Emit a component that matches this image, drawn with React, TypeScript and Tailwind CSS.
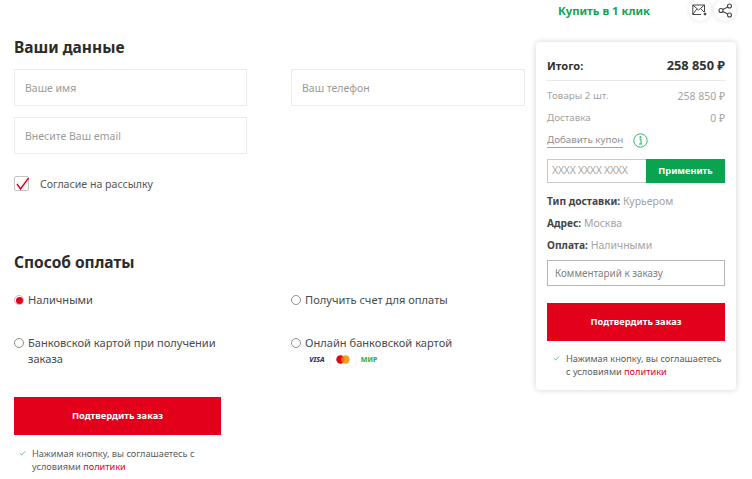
import { Check } from 'lucide-react';

const font = { fontFamily: '"Noto Sans", sans-serif' };

function Field({ placeholder }: { placeholder: string }) {
  return (
    <div className="flex h-[37px] w-full items-center border border-[#ebebeb] bg-white pl-[10px] pt-[2px] text-[10.5px] text-[#9a9a9a]">
      {placeholder}
    </div>
  );
}

function Radio({ active = false }: { active?: boolean }) {
  return active ? (
    <span className="mt-[3px] flex h-[10px] w-[10px] shrink-0 items-center justify-center rounded-full border border-[#f2a5ae]">
      <span className="h-[7px] w-[7px] rounded-full bg-[#e2001a]" />
    </span>
  ) : (
    <span className="mt-[3px] h-[10px] w-[10px] shrink-0 rounded-full border border-[#8f8f8f]" />
  );
}

function PayOption({ label, active, children }: { label: string; active?: boolean; children?: React.ReactNode }) {
  return (
    <div className="flex items-start gap-[4px] text-[11.1px] leading-[16px] text-[#4a4a4a]">
      <Radio active={active} />
      <div>
        <div>{label}</div>
        {children}
      </div>
    </div>
  );
}

function Agreement({ width, line1, line2 }: { width: string; line1: string; line2: string }) {
  return (
    <div className={`flex items-start gap-[6px] text-[9.2px] leading-[13px] text-[#5c5c5c] ${width}`}>
      <Check className="mt-[3px] shrink-0 text-[#3fb56f]" size={7} strokeWidth={3} />
      <div>
        <div className="whitespace-nowrap">{line1}</div>
        <div className="whitespace-nowrap">
          {line2} <span className="text-[#e2001a]">политики</span>
        </div>
      </div>
    </div>
  );
}

function SubmitButton({ width }: { width: string }) {
  return (
    <button className={`flex h-[38px] items-center justify-center bg-[#e2001a] text-[9.3px] font-bold text-white ${width}`}>
      Подтвердить заказ
    </button>
  );
}

function Cards() {
  return (
    <div className="mt-[1px] flex gap-[2px]">
      <div className="flex h-[15px] w-[24px] items-center justify-center bg-white text-[7px] font-extrabold italic text-[#26337a] shadow-[0_0_2px_#eee]">
        VISA
      </div>
      <div className="flex h-[15px] w-[24px] items-center justify-center bg-white shadow-[0_0_2px_#eee]">
        <svg width="14" height="9" viewBox="0 0 14 9">
          <circle cx="4.5" cy="4.5" r="4.2" fill="#e2001a" />
          <circle cx="9.5" cy="4.5" r="4.2" fill="#f59e1b" />
          <path d="M7 1.2a4.2 4.2 0 0 1 0 6.6a4.2 4.2 0 0 1 0-6.6z" fill="#f26a1b" />
        </svg>
      </div>
      <div className="flex h-[15px] w-[24px] items-center justify-center bg-white text-[7px] font-extrabold text-[#3fae49] shadow-[0_0_2px_#eee]">
        МИР
      </div>
    </div>
  );
}

function IconCircle({ children }: { children: React.ReactNode }) {
  return (
    <div className="flex h-[22px] w-[22px] items-center justify-center rounded-full bg-white shadow-[0_0_4px_rgba(0,0,0,0.12)]">
      {children}
    </div>
  );
}

export default function App() {
  return (
    <div className="flex h-[479px] w-[752px] overflow-hidden bg-white" style={font}>
      <div className="w-[536px] shrink-0 pl-[14px] pt-[36px]">
        <h2 className="text-[15.5px] font-bold leading-[23px] text-[#2b2b2b]">Ваши данные</h2>
        <div className="mt-[10px] grid grid-cols-[233px_234px] gap-x-[44px] gap-y-[11px]">
          <Field placeholder="Ваше имя" />
          <Field placeholder="Ваш телефон" />
          <Field placeholder="Внесите Ваш email" />
        </div>
        <div className="mt-[22px] flex items-start gap-[11px]">
          <span className="relative h-[15px] w-[15px] rounded-[2px] border border-[#c4c4c4]">
            <svg className="absolute left-0 top-[-1px]" width="15" height="15" viewBox="0 0 15 15" fill="none">
              <path d="M2 8l3.5 5L13.5 2" stroke="#e2001a" strokeWidth="1.4" />
            </svg>
          </span>
          <span className="pt-[1px] text-[10.6px] leading-[15px] text-[#555]">Согласие на рассылку</span>
        </div>
        <h2 className="mt-[58px] text-[15.5px] font-bold leading-[25px] text-[#2b2b2b]">Способ оплаты</h2>
        <div className="mt-[17px] grid grid-cols-[233px_234px] gap-x-[44px]">
          <div className="h-[43px]">
            <PayOption label="Наличными" active />
          </div>
          <PayOption label="Получить счет для оплаты" />
          <div className="h-[62px]">
            <PayOption label="Банковской картой при получении заказа" />
          </div>
          <PayOption label="Онлайн банковской картой">
            <Cards />
          </PayOption>
        </div>
        <SubmitButton width="w-[207px]" />
        <div className="mt-[12px] pl-[5px]">
          <Agreement width="w-[190px]" line1="Нажимая кнопку, вы соглашаетесь с" line2="условиями" />
        </div>
      </div>
      <div className="w-[200px] shrink-0">
        <div className="flex h-[42px] items-start">
          <span className="ml-[22px] mt-[3px] whitespace-nowrap text-[11.3px] font-bold text-[#12a550]">Купить в 1 клик</span>
          <div className="-mt-[1px] ml-auto flex gap-[3px]">
            <IconCircle>
              <svg width="16" height="13" viewBox="0 0 16 13" fill="none" stroke="#444" strokeWidth="1">
                <path d="M12.5 8V1H.8v9.5H9" />
                <path d="M.8 1l5.8 5 5.9-5M.8 10.5l4-5.5M12 8l-3-3" />
                <circle cx="13" cy="10" r="1" fill="#444" />
              </svg>
            </IconCircle>
            <IconCircle>
              <svg width="15" height="15" viewBox="0 0 15 15" fill="none" stroke="#444" strokeWidth="1.1">
                <circle cx="11.5" cy="3" r="2" />
                <circle cx="3" cy="7.5" r="2" />
                <circle cx="11.5" cy="12" r="2" />
                <path d="M4.8 6.5l5-2.6M4.8 8.5l5 2.6" />
              </svg>
            </IconCircle>
          </div>
        </div>
        <div className="h-[348px] rounded-[4px] bg-white px-[11px] pt-[13px] shadow-[0_0_6px_rgba(0,0,0,0.18)]">
          <div className="flex h-[26px] items-center justify-between border-b border-[#e8e8e8] pb-[3px] text-[11.1px] font-bold text-[#333]">
            <span>Итого:</span>
            <span className="text-[12.8px]">258 850 ₽</span>
          </div>
          <div className="mt-[7px] flex justify-between text-[9.8px] leading-[16px] text-[#a3a3a3]">
            <span>Товары 2 шт.</span>
            <span className="text-[10.5px]">258 850 ₽</span>
          </div>
          <div className="mt-[6px] flex justify-between text-[9.8px] leading-[16px] text-[#a3a3a3]">
            <span>Доставка</span>
            <span className="text-[10.5px]">0 ₽</span>
          </div>
          <div className="mt-[6px] flex items-center gap-[10px]">
            <span className="border-b border-[#a3a3a3] text-[9.8px] leading-[15px] text-[#909090]">Добавить купон</span>
            <svg width="15" height="15" viewBox="0 0 15 15" fill="none" stroke="#3fb56f">
              <circle cx="7.5" cy="7.5" r="6.7" />
              <circle cx="7.5" cy="4.2" r="0.7" fill="#3fb56f" />
              <path d="M6.5 6.3h1.5v4.5M5.8 11h3.5" strokeWidth="1.1" />
            </svg>
          </div>
          <div className="mt-[11px] flex h-[24px]">
            <div className="flex w-[99px] items-center overflow-hidden whitespace-nowrap border border-r-0 border-[#c9c9c9] pl-[4px] text-[10.5px] tracking-tight text-[#a8a8a8]">
              XXXX XXXX XXXX
            </div>
            <div className="flex flex-1 items-center justify-center bg-[#0aa34f] text-[9.2px] font-bold text-white">
              Применить
            </div>
          </div>
          <div className="mt-[7px] text-[10.5px] leading-[22px] text-[#a3a3a3]">
            <div>
              <b className="text-[10.2px] text-[#444]">Тип доставки:</b> Курьером
            </div>
            <div>
              <b className="text-[10.2px] text-[#444]">Адрес:</b> Москва
            </div>
            <div>
              <b className="text-[10.2px] text-[#444]">Оплата:</b> Наличными
            </div>
          </div>
          <div className="mt-[4px] flex h-[26px] items-center border border-[#b5b5b5] pl-[7px] text-[9.9px] text-[#808080]">
            Комментарий к заказу
          </div>
          <div className="mt-[17px]">
            <SubmitButton width="w-[178px]" />
          </div>
          <div className="mt-[11px] pl-[6px]">
            <Agreement width="w-[170px]" line1="Нажимая кнопку, вы соглашаетесь" line2="с условиями" />
          </div>
        </div>
      </div>
    </div>
  );
}
